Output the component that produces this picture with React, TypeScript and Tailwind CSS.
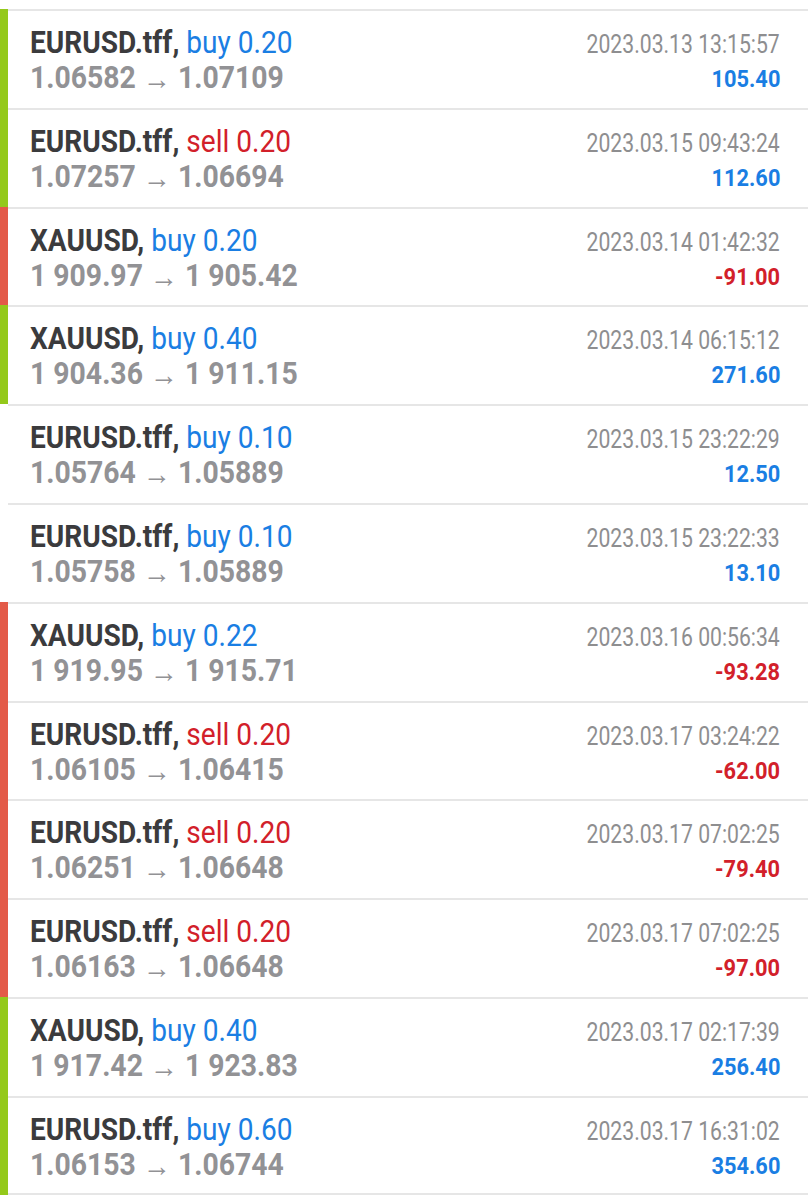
import React from "react";

type Row = {
  sym: string;
  side: "buy" | "sell";
  vol: string;
  from: string;
  to: string;
  date: string;
  profit: string;
  bar: "green" | "red" | "none";
};

const rows: Row[] = [
  { sym: "EURUSD.tff", side: "buy", vol: "0.20", from: "1.06582", to: "1.07109", date: "2023.03.13 13:15:57", profit: "105.40", bar: "green" },
  { sym: "EURUSD.tff", side: "sell", vol: "0.20", from: "1.07257", to: "1.06694", date: "2023.03.15 09:43:24", profit: "112.60", bar: "green" },
  { sym: "XAUUSD", side: "buy", vol: "0.20", from: "1 909.97", to: "1 905.42", date: "2023.03.14 01:42:32", profit: "-91.00", bar: "red" },
  { sym: "XAUUSD", side: "buy", vol: "0.40", from: "1 904.36", to: "1 911.15", date: "2023.03.14 06:15:12", profit: "271.60", bar: "green" },
  { sym: "EURUSD.tff", side: "buy", vol: "0.10", from: "1.05764", to: "1.05889", date: "2023.03.15 23:22:29", profit: "12.50", bar: "none" },
  { sym: "EURUSD.tff", side: "buy", vol: "0.10", from: "1.05758", to: "1.05889", date: "2023.03.15 23:22:33", profit: "13.10", bar: "none" },
  { sym: "XAUUSD", side: "buy", vol: "0.22", from: "1 919.95", to: "1 915.71", date: "2023.03.16 00:56:34", profit: "-93.28", bar: "red" },
  { sym: "EURUSD.tff", side: "sell", vol: "0.20", from: "1.06105", to: "1.06415", date: "2023.03.17 03:24:22", profit: "-62.00", bar: "red" },
  { sym: "EURUSD.tff", side: "sell", vol: "0.20", from: "1.06251", to: "1.06648", date: "2023.03.17 07:02:25", profit: "-79.40", bar: "red" },
  { sym: "EURUSD.tff", side: "sell", vol: "0.20", from: "1.06163", to: "1.06648", date: "2023.03.17 07:02:25", profit: "-97.00", bar: "red" },
  { sym: "XAUUSD", side: "buy", vol: "0.40", from: "1 917.42", to: "1 923.83", date: "2023.03.17 02:17:39", profit: "256.40", bar: "green" },
  { sym: "EURUSD.tff", side: "buy", vol: "0.60", from: "1.06153", to: "1.06744", date: "2023.03.17 16:31:02", profit: "354.60", bar: "green" },
];

function TradeRow({ r, last }: { r: Row; last: boolean }) {
  const barClass =
    r.bar === "green" ? "bg-[#94c91b]" : r.bar === "red" ? "bg-[#e35a48]" : "bg-white";
  const neg = r.profit.startsWith("-");
  return (
    <div className="flex h-[98.8px]">
      <div className={`w-[8px] shrink-0 ${barClass}`} />
      <div
        className={`flex flex-1 justify-between border-t-2 border-[#e6e6e6] pl-[22px] pr-[28px] pt-[15px] ${
          last ? "border-b-2" : ""
        }`}
      >
        <div className="flex flex-col items-start">
          <div className="text-[30.5px] leading-[34px] whitespace-nowrap origin-left scale-x-[0.92]">
            <span className="font-bold text-[#3b3b3d]">{r.sym},</span>{" "}
            <span className={r.side === "buy" ? "text-[#1a7ee3]" : "text-[#d2202a]"}>
              {r.side} {r.vol}
            </span>
          </div>
          <div className="mt-[1px] text-[30.5px] leading-[34px] font-bold text-[#929295] whitespace-nowrap origin-left scale-x-[0.93]">
            {r.from}{" "}
            <span className="text-[30px] font-normal relative top-[1px]">→</span>{" "}
            {r.to}
          </div>
        </div>
        <div className="flex flex-col items-end">
          <div className="mt-[1px] text-[25.5px] leading-[34px] text-[#8e8e90] whitespace-nowrap origin-right scale-x-[0.83]">
            {r.date}
          </div>
          <div
            className={`mt-[1px] text-[24.5px] leading-[34px] font-bold whitespace-nowrap origin-right scale-x-[0.89] ${
              neg ? "text-[#d2202a]" : "text-[#1a7ee3]"
            }`}
          >
            {r.profit}
          </div>
        </div>
      </div>
    </div>
  );
}

export default function App() {
  return (
    <div
      className="w-[808px] h-[1200px] bg-white pt-[9px] overflow-hidden"
      style={{ fontFamily: "Roboto, 'Liberation Sans', sans-serif" }}
    >
      {rows.map((r, i) => (
        <TradeRow key={i} r={r} last={i === rows.length - 1} />
      ))}
    </div>
  );
}
